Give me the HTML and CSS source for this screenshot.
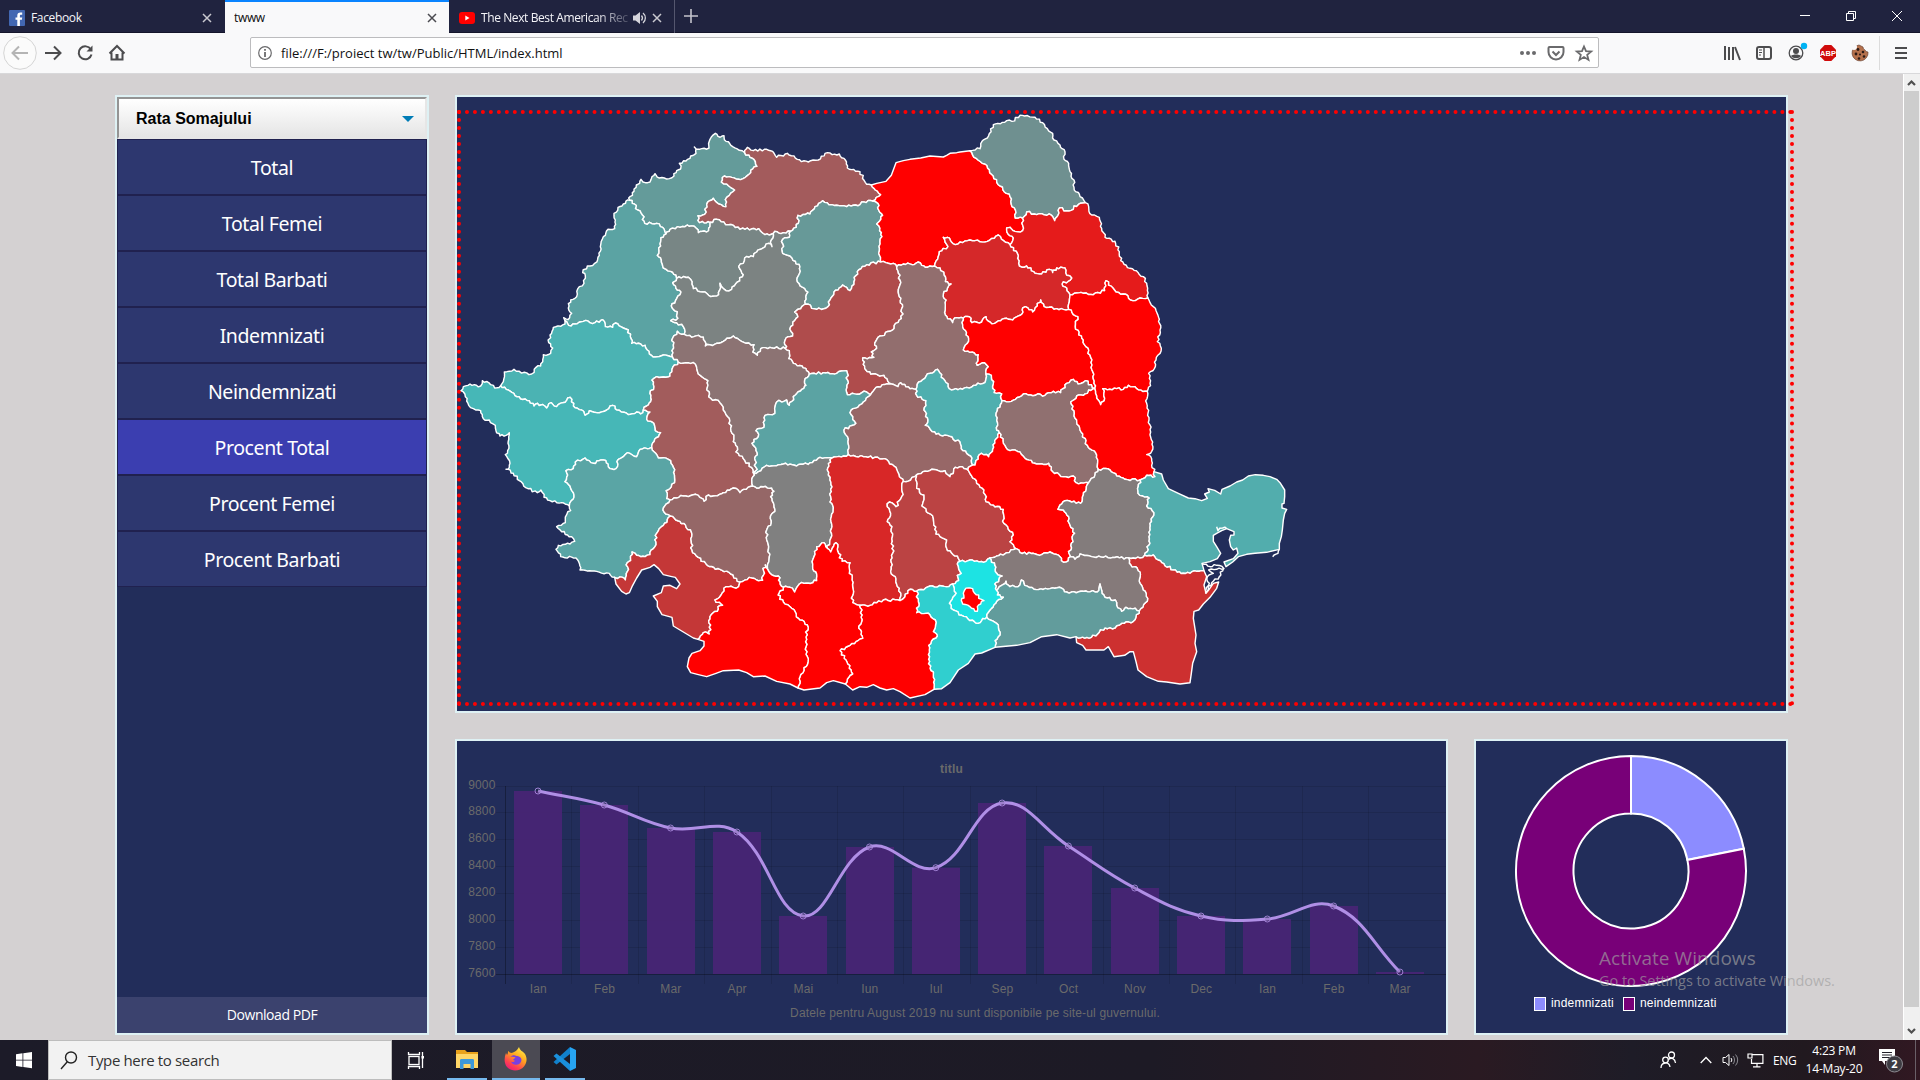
FILE: index.html
```html
<!DOCTYPE html>
<html lang="ro">
<head>
<meta charset="utf-8">
<title>twww</title>
<link rel="stylesheet" href="styles.css">
</head>
<body>
<div class="screen">
  <header class="tabs">
    <div class="tab">
      <svg class="tab-icon" width="16" height="16" viewBox="0 0 16 16"><rect width="16" height="16" rx="1" fill="#4267b2"/><path d="M8.300 16V9.800H6.500V7.400h1.800V5.700c0-2 1.100-3.200 3.100-3.200h1.800v2.300h-1.200c-.9 0-1.100.4-1.100 1.100v1.500h2.300l-.3 2.400h-2V16z" fill="#fff"/></svg>
      <span class="tab-title">Facebook</span>
      <svg class="x" width="10" height="10" viewBox="0 0 10 10"><path d="M1 1l8 8M9 1l-8 8"/></svg>
    </div>
    <div class="tab active">
      <span class="tab-title">twww</span>
      <svg class="x" width="10" height="10" viewBox="0 0 10 10"><path d="M1 1l8 8M9 1l-8 8"/></svg>
    </div>
    <div class="tab last">
      <svg class="tab-icon" width="16" height="16" viewBox="0 0 16 16"><rect y="2" width="16" height="12" rx="3" fill="#f00"/><path d="M6.300 5.500v5l4.200-2.500z" fill="#fff"/></svg>
      <span class="tab-title fade">The Next Best American Rec</span>
      <svg class="sound" width="14" height="14" viewBox="0 0 14 14"><path d="M0 4.500h2.500L7 1v12L2.500 9.500H0z" fill="#d5d5dc"/><path d="M8.500 4.500a4 4 0 0 1 0 5M10 2a6.500 6.500 0 0 1 0 10" fill="none" stroke="#d5d5dc" stroke-width="1.300"/></svg>
      <svg class="x" width="10" height="10" viewBox="0 0 10 10"><path d="M1 1l8 8M9 1l-8 8"/></svg>
    </div>
    <svg class="plus" width="14" height="14" viewBox="0 0 14 14"><path d="M7 0v14M0 7h14" stroke="#c4c4cc" stroke-width="1.600"/></svg>
    <div class="winbtns">
      <svg width="46" height="32" viewBox="0 0 46 32"><path d="M18 15.500h10" stroke="#fff"/></svg>
      <svg width="46" height="32" viewBox="0 0 46 32"><path d="M18.500 13.500h7v7h-7zM20.500 13.500v-2h7v7h-2" fill="none" stroke="#fff"/></svg>
      <svg width="46" height="32" viewBox="0 0 46 32"><path d="M18 11l10 10M28 11l-10 10" stroke="#fff"/></svg>
    </div>
  </header>

  <nav class="toolbar">
    <svg class="back" width="34" height="34" viewBox="0 0 34 34"><circle cx="17" cy="17" r="16.300" fill="#fbfbfb" stroke="#d4d4d4"/><path d="M25 17H10M16 10.500L9.500 17l6.500 6.500" fill="none" stroke="#b4b4b4" stroke-width="2"/></svg>
    <svg width="32" height="32" viewBox="0 0 32 32"><path d="M8 16h15M17 9.500l6.500 6.500-6.500 6.500" fill="none" stroke="#4c4c4e" stroke-width="2"/></svg>
    <svg width="32" height="32" viewBox="0 0 32 32"><path d="M21.800 12.500A6.500 6.500 0 1 0 22.500 17.500" fill="none" stroke="#4c4c4e" stroke-width="2"/><path d="M23.500 8.500v6h-6z" fill="#4c4c4e"/></svg>
    <svg width="32" height="32" viewBox="0 0 32 32"><path d="M8.500 16.500L16 9l7.500 7.500M10.500 15.500v7h11v-7" fill="none" stroke="#4c4c4e" stroke-width="2"/><path d="M14.500 17h3v5.500h-3z" fill="#4c4c4e"/></svg>
    <div class="url">
      <svg class="info" width="14" height="14" viewBox="0 0 14 14"><circle cx="7" cy="7" r="6.300" fill="none" stroke="#6a6a6c" stroke-width="1.200"/><path d="M7 6v5M7 3v1.800" stroke="#6a6a6c" stroke-width="1.800"/></svg>
      <span class="addr">file:///F:/proiect tw/tw/Public/HTML/index.html</span>
      <svg width="28" height="28" viewBox="0 0 28 28" fill="#6a6a6c"><circle cx="8" cy="14" r="2"/><circle cx="14" cy="14" r="2"/><circle cx="20" cy="14" r="2"/></svg>
      <svg width="28" height="28" viewBox="0 0 28 28" fill="none" stroke="#6a6a6c" stroke-width="2"><path d="M7.500 8h13c.6 0 1 .4 1 1v4a7.500 7.500 0 0 1-15 0V9c0-.6.400-1 1-1z"/><path d="M10.500 12.500L14 16l3.500-3.500"/></svg>
      <svg width="28" height="28" viewBox="0 0 28 28"><path d="M14 7.500l2 4.700 5.200.4-4 3.300 1.300 5-4.500-2.800-4.500 2.800 1.300-5-4-3.300 5.200-.4z" fill="none" stroke="#6a6a6c" stroke-width="1.800"/></svg>
    </div>
    <div class="tools">
      <svg width="32" height="32" viewBox="0 0 32 32"><path d="M10 9v14M14 10v13M18 10v13M20 10l5 13" stroke="#4c4c4e" stroke-width="2" transform="translate(-1)"/></svg>
      <svg width="32" height="32" viewBox="0 0 32 32"><rect x="9" y="10" width="14" height="12" rx="2" fill="none" stroke="#4c4c4e" stroke-width="2"/><path d="M16 10v12" stroke="#4c4c4e" stroke-width="1.500"/><path d="M11 13h3M11 15.500h3M11 18h2" stroke="#4c4c4e"/></svg>
      <svg width="32" height="32" viewBox="0 0 32 32"><circle cx="16" cy="16" r="6.800" fill="none" stroke="#4c4c4e" stroke-width="1.300"/><circle cx="16" cy="14" r="3" fill="#4c4c4e"/><path d="M11 19c1.500-2 8.500-2 10 0-2 3-8 3-10 0z" fill="#4c4c4e"/><circle cx="24" cy="9" r="3.200" fill="#00b3f4"/></svg>
      <svg width="32" height="32" viewBox="0 0 32 32"><path d="M12.700 8h6.600L24 12.700v6.600L19.300 24h-6.600L8 19.300v-6.600z" fill="#d00b0b"/><text x="16" y="19" text-anchor="middle" class="abp">ABP</text></svg>
      <svg width="32" height="32" viewBox="0 0 32 32"><path d="M15 8a8 8 0 1 0 9 7 3 3 0 0 1-3-2 3 3 0 0 1-2-3z" fill="#b5714c" stroke="#6d4636" stroke-width=".7"/><circle cx="10" cy="10" r="3" fill="#f9f9fa"/><g fill="#2b1a16"><circle cx="14" cy="12.500" r="1.400"/><circle cx="19" cy="15" r="1.300"/><circle cx="12" cy="17" r="1.400"/><circle cx="16" cy="17.500" r="1"/><circle cx="20" cy="19.500" r="1.300"/><circle cx="15" cy="21.500" r="1.300"/></g></svg>
    </div>
    <svg class="burger" width="38" height="34" viewBox="0 0 38 34"><path d="M.5 0v34" stroke="#dcdcdc"/><path d="M16 12h12M16 17h12M16 22h12" stroke="#4c4c4e" stroke-width="2"/></svg>
  </nav>

  <div class="viewport">
    <main class="grid">
      <aside class="panel side">
        <div class="select"><span>Rata Somajului</span><i class="arrow"></i></div>
        <ul class="menu">
          <li>Total</li><li>Total Femei</li><li>Total Barbati</li><li>Indemnizati</li>
          <li>Neindemnizati</li><li class="on">Procent Total</li><li>Procent Femei</li><li>Procent Barbati</li>
        </ul>
        <div class="pdf">Download PDF</div>
      </aside>
      <section class="panel mapbox"><svg id="map" class="map" viewBox="33 42 3987 1764"></svg></section>
      <section class="panel"><svg id="chart" class="chart" width="989" height="292" viewBox="457 741 989 292"></svg></section>
      <section class="panel">
        <svg class="donut" width="310" height="292" viewBox="1476 741 310 292">
          <g stroke="#fff" stroke-width="2">
            <path d="M1631 756A115 115 0 0 1 1743.800 848.700L1687.400 859.900A57.500 57.500 0 0 0 1631 813.500z" fill="#8c8cff"/>
            <path d="M1743.800 848.700A115 115 0 1 1 1631 756V813.500A57.500 57.500 0 1 0 1687.400 859.900z" fill="#780078"/>
          </g>
          <rect x="1534.500" y="997.500" width="11" height="13" fill="#8c8cff" stroke="#fff"/>
          <text x="1551" y="1007">indemnizati</text>
          <rect x="1623.500" y="997.500" width="11" height="13" fill="#780078" stroke="#fff"/>
          <text x="1640" y="1007">neindemnizati</text>
        </svg>
      </section>
    </main>
    <div class="scroll">
      <svg width="15" height="17" viewBox="0 0 15 17"><path d="M4 11l3.500-3.500L11 11" fill="none" stroke="#505050" stroke-width="2.200"/></svg>
      <div class="thumb"></div>
      <svg width="15" height="17" viewBox="0 0 15 17"><path d="M4 6l3.500 3.500L11 6" fill="none" stroke="#505050" stroke-width="2.200"/></svg>
    </div>
  </div>

  <footer class="taskbar">
    <svg width="48" height="40" viewBox="0 0 48 40"><path d="M16 14.200l6.500-.9v6.400H16zM23.300 13.200l8.700-1.200v7.700h-8.700zM16 20.500h6.500v6.400l-6.500-.9zM23.300 20.500H32v7.700l-8.700-1.200z" fill="#fff"/></svg>
    <div class="search">
      <svg width="18" height="20" viewBox="0 0 18 20"><circle cx="11" cy="7.500" r="5.500" fill="none" stroke="#222" stroke-width="1.400"/><path d="M7.300 11.800L1 19" stroke="#222" stroke-width="1.400"/></svg>
      <span>Type here to search</span>
    </div>
    <svg width="48" height="40" viewBox="0 0 48 40" fill="none" stroke="#fff" stroke-width="1.300"><rect x="18" y="16.500" width="10" height="8"/><path d="M17.500 12v2.500h11V12M17.500 29v-2.500h11V29M31.500 12v16"/><rect x="30.500" y="16" width="2.500" height="2.500" fill="#fff" stroke="none"/></svg>
    <div class="app a1"><svg width="24" height="22" viewBox="0 0 24 22"><path d="M1 2h9l2 2h11v16H1z" fill="#e9a21b"/><path d="M1 6h22v14H1z" fill="#ffd667"/><path d="M5 21v-8.500c0-1 .5-1.500 1.500-1.500h11c1 0 1.500.5 1.500 1.500V21h-3.500v-5h-7v5z" fill="#3d98d9"/></svg></div>
    <div class="app a2"><svg width="26" height="26" viewBox="0 0 26 26"><defs><linearGradient id="fx" x1=".8" y1="0" x2=".2" y2="1"><stop offset="0" stop-color="#fff14a"/><stop offset=".4" stop-color="#ffa61e"/><stop offset=".75" stop-color="#ff4150"/><stop offset="1" stop-color="#e9177d"/></linearGradient></defs><path d="M16 1c1 4 4 4 6 7 2 3.500 2.500 8-1 12.500-4 5-13 5.500-17 .5C1 17 1 12 3 7l1 2c1-1.500 1-2.500 1-4 1.500 1 2 2 4 2 2-1 5-2 7-6z" fill="url(#fx)"/><path d="M7.500 11c1.500-2 4-2.500 6-1 2 .2 5 1 5 4a5.500 5.500 0 0 1-10.500 1.500c1.500 1 3 .5 4-.8-1.500 0-2-.8-1.500-1.700 1-.5 1.500-.8 2-1.500-1.500-.8-3.500-.8-5-.5z" fill="#7a3fe0"/></svg></div>
    <div class="app a3"><svg width="26" height="26" viewBox="0 0 26 26"><path d="M18 1l6 3v18l-6 3z" fill="#27a4f2"/><path d="M18 1v7L4.500 18.500 1.500 16z" fill="#1180cb"/><path d="M18 25v-7L4.500 7.500 1.500 10z" fill="#1a90dc"/></svg></div>
    <div class="tray">
      <svg class="people" width="18" height="18" viewBox="0 0 18 18" fill="none" stroke="#fff" stroke-width="1.300"><circle cx="12.500" cy="4" r="3"/><circle cx="6.500" cy="9" r="2.800"/><path d="M2 17c0-6 8-7 9-1M9.500 8.500c3-2.500 6.500-1 7 3.500"/></svg>
      <svg class="chev" width="12" height="8" viewBox="0 0 12 8"><path d="M.7 7L6 1.500 11.300 7" fill="none" stroke="#fff" stroke-width="1.300"/></svg>
      <svg class="spk" width="17" height="14" viewBox="0 0 17 14" fill="none" stroke="#fff"><path d="M1 4.500h2.500L7 1.500v11L3.500 9.500H1zM9 5a3 3 0 0 1 0 4"/><path d="M11 3a6 6 0 0 1 0 8M13.500 1.500a8 8 0 0 1 0 11" stroke="#8a8a90"/></svg>
      <svg class="net" width="17" height="15" viewBox="0 0 17 15" fill="none" stroke="#fff" stroke-width="1.200"><path d="M5.500 1.600h10.400v8.800H4.500V6M10 10.500V14M6 13.900h7.500M1 1h4v4H1z"/></svg>
      <span class="lang">ENG</span>
      <div class="clock"><span>4:23 PM</span><span>14-May-20</span></div>
      <svg class="note" width="26" height="26" viewBox="0 0 26 26"><path d="M1 2h16v12H7v4l-3-4H1z" fill="#fff"/><path d="M4 5.500h10M4 8h10M4 10.500h10" stroke="#22202a"/><circle cx="16.500" cy="17" r="8" fill="#3d3b42" stroke="#8d8b92"/><text x="16.500" y="21" text-anchor="middle" class="badge">2</text></svg>
      <i class="peek"></i>
    </div>
  </footer>

  <div class="watermark"><b>Activate Windows</b><span>Go to Settings to activate Windows.</span></div>
</div>
<script src="charts.js"></script>
</body>
</html>
```

FILE: styles.css
```css
* { box-sizing: border-box; }
body { margin: 0; font-family: "Open Sans", "Noto Sans", sans-serif; overflow: hidden; }
svg { display: block; flex: none; }
.screen { width: 1920px; height: 1080px; display: flex; flex-direction: column; background: #d4d1d2; }

.tabs { height: 33px; flex: none; display: flex; align-items: center; background: #20233f; border-bottom: 1px solid #14152b; }
.tab { width: 225px; height: 33px; display: flex; align-items: center; padding: 3px 13px 0 9px; color: #f4f4f8; font-size: 12px; letter-spacing: -.35px; }
.tab.active { width: 224px; background: #f9f9fa; color: #0c0c0d; border-top: 2px solid #0a84ff; padding-top: 1px; padding-right: 12px; }
.tab.last { width: 226px; border-right: 1px solid #55576f; padding-right: 12px; padding-left: 10px; }
.tab-icon { margin-right: 6px; }
.tab-title { flex: 1; white-space: nowrap; overflow: hidden; }
.fade { letter-spacing: -.4px; -webkit-mask-image: linear-gradient(90deg, #000 78%, transparent 104%); mask-image: linear-gradient(90deg, #000 78%, transparent 104%); }
.sound { margin: 0 5px 0 4px; }
.x { stroke: #c9c9d0; stroke-width: 1.500; }
.active .x { stroke: #4a4a4f; }
.plus { margin-left: 9px; }
.winbtns { display: flex; margin-left: auto; }

.toolbar { height: 41px; flex: none; display: flex; align-items: center; padding: 0 0 1px 3px; background: #f9f9fa; border-bottom: 1px solid #d8d8da; }
.url { flex: none; width: 1349px; height: 31px; margin-left: 117px; display: flex; align-items: center; border: 1px solid #bcbcbe; border-radius: 2px; background: #fff; }
.info { margin: 0 9px 0 7px; }
.addr { flex: 1; font-size: 13px; color: #111; padding-top: 1px; }
.tools { display: flex; margin-left: 117px; }
.abp { font: bold 7.500px "Liberation Sans", sans-serif; fill: #fff; }
.burger { margin-left: 3px; }

.viewport { height: 966px; flex: none; display: flex; justify-content: space-between; }
.grid { display: grid; grid-template-columns: 314px 993px 314px; grid-template-rows: 618px 296px; gap: 26px; padding: 21px 0 0 115px; }
.panel { border: 2px solid #def1f4; background: #222d5a; min-width: 0; }
.side { grid-row: 1 / 3; display: flex; flex-direction: column; }
.mapbox { grid-column: 2 / 4; }
.map { width: 1337px; height: 596px; margin-top: 13px; border: 4px dotted #f00; overflow: visible; }
.map path { stroke: #fff; stroke-width: 4.300; stroke-linejoin: round; }
.select { height: 42px; flex: none; display: flex; align-items: center; justify-content: space-between; padding: 1px 11px 0 17px; border: 2px solid #e6e6e6; border-color: #949494 #e6e6e6 #e6e6e6 #949494; background: linear-gradient(#fff, #e5e5e5); font: bold 16px "Liberation Sans", sans-serif; }
.arrow { border: 6px solid transparent; border-top-color: #007cb6; border-bottom: 0; }
.menu { list-style: none; margin: 0; padding: 0; flex: 1; }
.menu li { height: 56px; display: flex; align-items: center; justify-content: center; background: #2d376f; border: 1px solid #20214f; color: #fff; font: 19.500px "Noto Sans", sans-serif; letter-spacing: -.4px; padding-top: 1px; }
.menu li.on { background: #3b3eb0; }
.pdf { height: 36px; display: flex; align-items: center; justify-content: center; padding-bottom: 1px; background: #3b426e; color: #fff; font-size: 14px; letter-spacing: -.45px; }
.chart text { font: 12px "Liberation Sans", sans-serif; letter-spacing: .16px; fill: #6a6a6a; }
.chart .title { font-weight: bold; }
.donut text { font: 12px "Liberation Sans", sans-serif; letter-spacing: .2px; fill: #fff; }
.bar { fill: #462574; fill-opacity: .97; }
.gridline { stroke: #000; stroke-opacity: .1; }
.axis { stroke: #000; stroke-opacity: .3; }
.line { fill: none; stroke: #b08fe6; stroke-width: 3; }
.dot { fill: #000; fill-opacity: .1; stroke: #b08fe6; stroke-opacity: .85; }

.scroll { width: 17px; height: 966px; border-left: 1px solid #fff; background: #f0f0f0; display: flex; flex-direction: column; }
.thumb { height: 916px; width: 15px; background: #cdcdcd; }
.scroll svg:last-child { margin-top: 16px; }

.taskbar { height: 40px; flex: none; display: flex; align-items: center; background: linear-gradient(90deg, #1c1b28, #1d1a25 60%, #2a1a22 77%, #1e1c27 85%, #21191f 94%, #311822); color: #fff; }
.search { width: 344px; height: 40px; display: flex; align-items: center; gap: 10px; padding-left: 11px; margin-right: -1px; background: #f2f2f2; border: 1px solid #bdbdbd; color: #333; font-size: 15px; letter-spacing: -.35px; }
.app { height: 40px; display: flex; align-items: center; justify-content: center; border-bottom: 2px solid #76b9ed; }
.a1 { width: 40px; margin-left: 8px; }
.a2 { width: 48px; margin-left: 5px; background: #4b4a53; }
.a3 { width: 40px; margin-left: 5px; }
.tray { margin-left: auto; display: flex; align-items: center; height: 40px; padding-right: 4px; }
.people { margin-right: 1px; }
.chev { margin-left: 22px; }
.spk { margin-left: 10px; }
.net { margin-left: 8px; }
.lang { margin-left: 9px; width: 24px; font-size: 12px; letter-spacing: -.4px; }
.clock { width: 68px; margin: 0 10px 0 3px; padding-bottom: 1px; display: flex; flex-direction: column; align-items: center; font-size: 12px; line-height: 18px; letter-spacing: -.2px; }
.note { margin-right: 11px; }
.peek { width: 1px; height: 40px; background: #6a6068; }
.badge { font: bold 11px "Open Sans", sans-serif; fill: #fff; }

.watermark { position: absolute; left: 1599px; top: 945px; display: flex; flex-direction: column; color: rgba(160, 160, 160, .68); white-space: nowrap; }
.watermark b { font-weight: 400; font-size: 19px; line-height: 26px; letter-spacing: .05px; }
.watermark span { font-size: 14.500px; line-height: 19px; letter-spacing: -.05px; }
```

FILE: charts.js
```js
const NS = "http://www.w3.org/2000/svg";
function add(parent, tag, attrs, text) {
  const el = document.createElementNS(NS, tag);
  for (const k in attrs) el.setAttribute(k, attrs[k]);
  if (text) el.textContent = text;
  parent.appendChild(el);
  return el;
}

const colors = {
  SM: "#649b9a", MM: "#a35b5c", BH: "#5ba3a3", SJ: "#788685", CJ: "#7c8382", BN: "#679998",
  SV: "#ff0000", BT: "#6f9090", IS: "#e51b1b", NT: "#d52829", MS: "#af4c4c", HR: "#926e6e",
  BC: "#ff0000", VS: "#ff0000", AR: "#4bb3b3", TM: "#46b7b7", HD: "#a25c5c", AB: "#8c7373",
  SB: "#5ba3a3", BV: "#976767", CV: "#4fafaf", VN: "#907070", GL: "#ff0000", CS: "#5aa5a5",
  MH: "#c43737", GJ: "#956767", VL: "#808080", AG: "#d82727", DB: "#bb4343", PH: "#bb4343",
  BZ: "#ff0000", BR: "#837c7c", TL: "#52adad", CT: "#cd3030", IL: "#857a7a", CL: "#629c9c",
  IF: "#1de3e3", GR: "#30cfcf", TR: "#ff0000", OT: "#ff0000", DJ: "#ff0000"
};

let seed = 7;
function rnd() { seed = (seed * 16807) % 2147483647; return seed / 2147483647 - .5; }

// Borders shared by two counties, or by one county and the outside ("-").
// A, B, C, D switch the quadrant that the following points are relative to;
// a leading "~" keeps the line smooth (rivers and the coast).
const quads = { A: [0, 0], B: [1200, 0], C: [0, 840], D: [1200, 840] };
const borders = `
SM - A 539,301 541,289 552,274 559,255 569,250 573,238 579,246 600,246 606,230 615,221 628,234 658,236 672,228 680,212 692,207 688,190 708,183 722,168 738,160 733,141 748,148 777,144 780,118 788,106 796,100 804,109 822,107 828,124 848,140 868,151 884,158
SM MM A 884,158 900,172 912,178 921,199 902,211 898,222 872,239 845,232 823,228 814,246 830,252 854,270 838,286 830,292 828,320 806,312 790,295 770,313 764,343 744,347 744,362 762,368 780,367
SM SJ A 780,367 780,380 770,396 745,398 738,384 712,375 682,380 660,388 648,402
SM BH A 648,402 638,382 620,370 584,370 577,345 563,330 553,312 539,301
BH - A 345,662 341,653 354,659 365,640 355,624 362,600 380,590 388,560 402,550 406,527 398,518 412,498 434,490 448,466 451,440 460,410 474,388 494,386 496,360 492,340 504,322 520,312 528,303 539,301
BH SJ A 648,402 633,413 632,438 622,466 634,480 640,504 662,514 678,525 680,535
BH CJ A 680,535 668,548 678,565 693,576 680,596 664,618 682,635 684,655 662,662 680,668 700,680 703,703
BH AB A 703,703 682,694 668,714 670,735 666,752 668,771
BH AR A 345,662 356,676 400,664 435,668 458,659 466,680 488,682 496,669 520,684 535,690 545,730 585,736 604,766 622,770 640,765 668,771
AR - A 152,857 160,845 163,816 192,808 208,814 245,822 258,802 272,798 280,764 302,760 308,744 296,728 300,705 310,682 345,672 345,662
AR TM A 152,857 175,870 200,890 238,902 252,918 262,910 290,924 304,908 320,920 338,908 360,892 370,918 395,930 405,946 418,932 440,938 470,930 488,916 500,930 535,944 560,936 572,942 580,930
AR HD A 580,930 590,918 602,905 600,880 612,860 606,840 620,830 660,828 666,808 685,786
AR AB A 685,786 668,771
TM - A 152,857 C 134,24 122,14 97,2 92,18 60,12 40,20 33,32 46,50 56,76 70,86 92,92 100,116 118,120 136,136 138,152 150,168 168,166 178,158 174,190 173,212 166,224 180,250 178,262 168,268 190,280 208,302 234,326 262,338 273,330 282,352 300,362 335,368 358,378
TM CS C 358,378 364,362 372,345 362,325 345,305 350,292 348,272 370,266 376,246 405,234 430,250 460,240 474,252 480,266 498,266 505,238 520,230 532,218 560,230 570,208 605,202
TM HD C 605,202 614,178 632,158 616,152 612,130 590,118 600,96 580,90
CS HD C 605,202 625,234 655,238 670,262 674,300 664,320 648,332 650,356 660,360
CS GJ C 660,360 640,384 642,396 662,408
CS MH C 662,408 640,436 620,460 618,486 600,524 585,530 560,526 546,516 542,542 532,548 532,575 526,600 518,592 494,592
CS - C 358,378 362,392 350,404 346,428 320,440 335,455 365,470 374,484 360,492 325,496 318,508 332,530 378,534 386,545 390,570 440,574 478,580 494,592
MH - ~ C 494,592 498,612 515,634 528,642 538,638 546,620 560,594 575,570 600,562 612,554 626,566 640,584 662,589 676,592 690,612 680,626 660,616 640,618 634,638 610,648 622,664 622,680 636,704 666,712 670,738 700,756 730,774 744,778
MH DJ C 744,778 760,758 778,762 782,735 776,722 788,700 802,694 804,680 818,676 795,660 816,640 822,624 850,622 866,620 870,606
MH GJ C 662,408 690,424 724,456 726,510 745,532 772,556 810,568 842,582 870,606
GJ HD C 660,360 700,348 745,346 762,364 776,345 790,348 820,338 850,324 870,338 908,318
GJ VL C 908,318 920,324 940,320 965,324 972,334 962,350 972,375 975,394 965,402 962,436 950,450 956,500 958,530 953,568
GJ DJ C 870,606 885,600 905,594 920,600 938,601 941,572 946,555 953,568
VL DJ C 953,568 960,580 985,588 990,612 1000,622
VL OT C 1000,622 1020,622 1034,636 1048,612 1075,610 1100,602 1100,582 1088,560 1092,530 1100,500 1122,488 1132,505
OT AG C 1132,505 1142,516 1158,488 1166,520 1176,544 1200,548 1198,566 1206,600 1208,668 1228,676
VL AG C 1132,505 1140,480 1146,440 1144,410 1150,382 1140,366 1144,335 1140,300 1132,270 1146,234
VL SB C 1146,234 1110,232 1080,248 1040,258 1000,252 950,256 925,275 910,278
VL HD C 910,278 908,318
HD AB A 685,786 715,788 736,792 745,822 774,842 772,862 776,890 810,908 820,930 838,955 C 842,145 852,165 850,185 862,200 858,216 880,236 905,262 910,278
AB SB C 910,278 922,268 918,262 914,235 922,225 918,205 906,190 912,178 925,170 918,152 942,142 945,106 975,100 980,66 1010,60 1018,76 1036,45 1064,18 A 1068,856 1066,835 1078,822
AB CJ A 703,703 725,712 745,706 760,712 766,738 800,730 850,708 888,730 912,734 908,756 922,766 932,746 960,742 1006,746
AB MS A 1006,746 1018,752 1016,776 1030,790 1056,798 1078,822
SJ MM A 780,367 800,358 835,374 885,388 926,386 945,404 970,400
SJ CJ A 680,535 715,532 726,545 730,566 765,576 782,590 806,584 810,550 828,572 845,568 862,546 880,524 866,500 880,490 884,474 910,470 920,456 955,430 966,440 964,420 970,400
MM CJ A 970,400 975,394 1000,398 1022,394
MM BN A 1022,394 1045,370 1044,346 1080,342 1095,320 1118,302 1145,314 1190,320 1230,314 1235,306 1268,303
MM SV A 1268,303 1292,284 1276,270 1264,255
MM - A 884,158 892,142 910,152 950,148 968,154 980,172 1012,160 1042,178 1075,186 1105,180 1125,160 1168,162 1186,180 1192,204 1230,215 1250,253 1264,255
SV - ~ B 64,255 80,250 108,244 124,226 138,188 160,182 180,178 212,174 240,168 280,171 290,166 300,160 320,158 330,156 360,152
SV BT B 360,152 384,180 405,192 430,228 450,258 480,290 486,320 498,338 496,354 518,354
BT - B 360,152 390,146 396,124 412,114 430,74 470,62 486,64 510,46 524,48 555,52 578,68 592,86 608,100 612,120 630,135 645,155 642,178 656,190 660,215 672,240 672,262 690,290 706,308
BT IS B 518,354 530,336 560,344 605,346 614,362 624,346 628,324 650,332 670,328 672,318 706,308
IS - B 706,308 716,320 725,345 748,352 755,385 765,412 795,424 808,455 812,482 840,505 880,530 890,550 894,594
IS VS B 894,594 870,594 848,602 820,582 798,576 768,542 764,572 730,584 700,580 660,584
IS NT B 660,584 650,564 636,552 665,534 650,526 645,504 620,504 608,518 598,508 575,522 555,520 530,498 508,498 502,460 480,434
SV IS B 518,354 518,392 495,394 480,382 470,384 474,402 490,414 480,434
SV NT B 480,434 445,405 412,424 375,422 330,426 316,434 292,412 280,412 294,440 268,455 254,498
NT HR B 254,498 270,504 282,525 286,545 303,552 292,565 280,582 288,600 286,645 308,668 314,654 340,654
NT BC B 340,654 358,650 366,668 395,666 408,650 420,666 434,670 470,655 488,660 516,642 518,624 534,624 548,636 562,618 572,600 582,620 620,626 640,628 656,628
NT VS B 660,584 658,605 656,628
BC VS B 656,628 684,650 676,680 700,720 720,765 726,810 732,850 734,866
BC HR B 340,654 338,674 356,716 340,750 385,764 382,796 404,788 415,800 408,822
SV HR B 254,498 232,502 215,496 204,486 186,494 160,492 140,500
SV MS B 140,500 130,490 92,486
SV BN B 92,486 86,460 90,425 96,410 90,385 80,372 98,346 86,330 84,310 68,303
BN CJ A 1022,394 1018,412 998,418 998,460 1026,474 1050,500 1042,545 1074,576 1066,612
BN MS A 1066,612 1100,628 1134,620 1140,600 1152,576 1178,555 1200,572 1212,545 1222,515 1250,494 1292,486
CJ MS A 1066,612 1034,636 1044,650 1022,680 1028,708 1008,714 1006,746
MS HR B 140,500 150,540 148,590 158,620 154,656 120,694 84,712 74,735 80,745 64,756 72,772 38,774 44,805 62,822 102,826 124,852
MS SB A 1078,822 1120,818 1160,820 1190,812 1192,884 1250,876 1262,884
MS BV B 62,884 78,862 124,852
HR BV B 124,852 144,860 152,848 180,866 198,868
HR CV B 198,868 206,846 240,820 262,808 280,836 304,870 350,862 405,848 408,822
BC CV B 408,822 424,826 432,878 455,882 456,902
BC VN B 456,902 484,904 520,882 585,886 610,874 632,878 650,850 670,838 684,852 706,842 734,866
VN GL B 734,866 716,870 712,880 680,888 662,906 680,960 D 690,150 712,196 740,225 745,268
VS GL B 734,866 740,895 752,914 764,895 758,866 800,866 820,868 835,856 860,866 892,874
VS - B 894,594 910,620 928,658 930,690 922,725 934,745 918,780 916,800 896,820 900,850 892,874
GL - B 892,874 890,910 897,960 D 902,156 908,186 905,214 890,224 905,236 912,275
GL TL D 912,275 915,290 890,286 870,300
GL BR D 745,268 780,270 800,288 825,298 870,300
VN BR D 745,268 735,285 716,308
VN BZ D 448,158 460,190 480,212 510,216 525,235 560,252 596,250 608,275 640,290 670,288 678,308 716,308
VN CV D 456,62 442,92 440,150 448,158
CV BZ D 448,158 434,182 428,208 416,230 394,220 375,255 368,255
CV BV D 198,28 200,46 228,62 222,90 234,120 226,136 258,162 285,165 330,185 334,206 362,228 368,255
BV BZ D 368,255 355,262 354,270
BV PH D 354,270 330,260 316,262 300,290 285,272 245,268 200,284
BV DB D 200,284 182,300 160,304
BV AG D 160,304 148,290 138,262 104,236 40,230 -5,224
SB AG C 1195,224 1146,234
SB BV C 1262,44 1240,66 1200,98 1218,130 1182,150 1194,185 1195,224
BZ PH D 354,270 380,310 402,330 408,365 430,375 460,388 462,430 475,448 490,465 480,485 498,506
BZ IL D 498,506 510,518 550,520 575,524 600,516 630,530 634,542 648,546 662,530
BZ BR D 716,308 700,345 692,370 645,362 624,388 640,390 656,410 660,435 674,460 664,490 658,522 662,530
BR IL D 662,530 675,538 690,522 760,532 836,534
BR CT D 836,534 850,534 870,534 884,526
BR TL D 870,300 864,340 898,354 890,378 912,398 900,430 900,490 884,526
TL - ~ D 912,275 935,282 940,300 955,326 985,340 1015,354 1035,356 1055,362 1072,355 1064,342 1078,336 1074,326 1094,331 1112,342 1116,328 1140,318 1160,306 1178,300 1195,288 1216,284 1240,286 1260,290 1280,298 1290,308 1304,330 1304,350 1302,370 1296,372 1296,384 1310,388 1304,400 1300,420 1297,450 1294,470 1288,490 1288,508 1250,517 1215,520 1190,523 1165,530 1148,546 1128,560 1122,546 1150,536 1164,520 1160,504 1150,510 1142,500 1138,480 1142,466 1152,465 1152,455 1130,446 1115,452 1100,460 1090,466 1090,484 1100,500 1112,520 1102,536 1080,545 1056,550 1062,572
TL CT D 884,526 910,525 935,548 970,570 1000,580 1040,574 1062,572
CT - ~ D 1062,572 1070,590 1062,615 1068,640 1076,630 1090,610 1106,606 1100,625 1080,652 1060,672 1046,690 1032,694 1030,715 1034,740 1038,765 1035,790 1040,815 1028,850 1024,880 1020,908 990,912 950,906 925,904 890,890 864,870 858,845 850,815 840,815 824,826 792,830 775,800 762,810 708,810 698,796 680,788 678,770
CT CL D 678,770 724,772 765,744 795,744 815,730 850,724 868,692
CT IL D 836,534 838,550 870,576 870,610 893,655 868,692
IL CL D 868,692 828,682 815,694 800,676 796,660 772,654 756,640 750,612 742,636 700,634 650,636 636,625 600,626 552,628 524,616 514,600 504,620 480,620 468,604 448,620 440,632
IF IL D 440,632 434,612 456,588 440,580 434,556 420,534
PH IL D 498,506 470,518 440,528 420,534
PH IF D 420,534 408,544 360,540 330,544
DB PH D 200,284 200,325 222,345 216,378 250,415 258,462 290,480 290,505 325,535 330,544
DB IF D 330,544 322,552 334,580 322,586 326,602 308,612
DB GR D 308,612 290,620 240,618 200,634
DB TR D 200,634 180,628 165,650 150,662
DB AG D 160,304 155,350 138,380 118,366 112,380 122,400 112,425 126,440 128,520 122,574 136,590 148,625 150,662
AG TR D 150,662 100,660 60,676 28,676
OT TR D 28,676 36,705 26,745 38,775 0,796 C 1170,812 1188,840 1208,882 1186,912
TR - ~ C 1186,912 1208,930 1230,920 1250,922 1270,914 1290,924 1310,930 D 130,926 150,935 180,954 225,944 252,928
TR GR D 200,634 205,665 200,698 235,700 256,720 250,755 262,768 236,796 240,865 250,885 252,928
GR - ~ D 252,928 275,926 300,908 325,870 355,850 375,822 395,819 435,802
GR CL D 435,802 435,782 450,765 445,735 410,712
GR IF D 308,612 318,640 298,670 310,690 335,706 378,730 395,722 410,712
IF CL D 410,712 420,690 440,664 460,652 442,645 440,632
CL - ~ D 678,770 660,774 620,764 575,770 540,788 500,796 435,802
DJ - ~ C 744,778 762,784 762,798 750,812 726,820 717,834 712,860 722,878 745,884 770,890 798,880 820,872 866,870 890,878 910,890 945,888 980,904 1020,912 1044,924
DJ OT C 1000,622 984,645 1000,666 1025,685 1045,715 1072,735 1068,800 1074,845 1050,890 1044,924
OT - ~ C 1044,924 1062,930 1110,924 1130,908 1150,902 1186,912
`.trim().split("\n").map(parse);

function parse(row) {
  const t = row.split(" "), ids = t.splice(0, 2);
  const smooth = t[0] === "~";
  if (smooth) t.shift();
  let q = [0, 0];
  const pts = [];
  for (const w of t) {
    if (quads[w]) q = quads[w];
    else { const [x, y] = w.split(",").map(Number); pts.push([x + q[0], y + q[1]]); }
  }
  return { ids, pts: smooth ? pts : rough(pts) };
}

function rough(pts) {
  const out = [pts[0]];
  for (let i = 1; i < pts.length; i++) {
    const [ax, ay] = pts[i - 1], [bx, by] = pts[i];
    const len = Math.hypot(bx - ax, by - ay), n = Math.max(1, Math.round(len / 7));
    for (let k = 1; k < n; k++) {
      const f = k / n, d = rnd() * 8;
      out.push([ax + (bx - ax) * f - (by - ay) / len * d, ay + (by - ay) * f + (bx - ax) / len * d]);
    }
    out.push([bx, by]);
  }
  return out;
}

function dist(a, b) { return Math.hypot(a[0] - b[0], a[1] - b[1]); }
function ring(id) {
  const rest = borders.filter(b => b.ids.includes(id)).map(b => b.pts);
  let out = rest.shift().slice();
  while (rest.length) {
    const end = out[out.length - 1];
    let best = 0, flip = false, min = Infinity;
    rest.forEach((p, i) => {
      if (dist(end, p[0]) < min) { min = dist(end, p[0]); best = i; flip = false; }
      if (dist(end, p[p.length - 1]) < min) { min = dist(end, p[p.length - 1]); best = i; flip = true; }
    });
    const next = rest.splice(best, 1)[0].slice();
    out = out.concat(flip ? next.reverse() : next);
  }
  return out;
}
function path(pts) { return "M" + pts.map(p => p[0].toFixed(1) + " " + p[1].toFixed(1)).join("L"); }

const map = document.getElementById("map");
for (const id in colors) add(map, "path", { d: path(ring(id)) + "Z", fill: colors[id] });
const city = parse("B - D 344,630 355,624 368,626 374,640 386,645 386,655 402,662 392,672 382,680 382,694 360,680 338,672 334,662 342,654 340,640 344,630");
add(map, "path", { d: path(city.pts) + "Z", fill: "#f00" });
[ // lagoons and islets by the Danube delta
  "X - D 1056,550 1080,560 1100,556 1122,566 1100,568 1076,570 1090,580 1072,590 1078,610 1068,630",
  "X - D 1120,566 1108,590 1085,608 1066,640",
  "X - D 1100,440 1104,452 1118,444 1130,446",
  "X - D 1288,508 1284,520 1268,530"
].forEach(s => add(map, "path", { d: path(parse(s).pts), fill: "none" }));

const chart = document.getElementById("chart");
const labels = ["Ian", "Feb", "Mar", "Apr", "Mai", "Iun", "Iul", "Sep", "Oct", "Nov", "Dec", "Ian", "Feb", "Mar"];
const ys = [791, 805, 828, 832, 916, 847, 867.7, 803, 846, 888, 916, 919, 906, 972];
const left = 505.5, top0 = 786.5, bottom = 974.5, step = 66.4;
for (let i = 0; i < 8; i++) {
  const y = Math.round(top0 + i * (bottom - top0) / 7) - .5;
  add(chart, "path", { d: `M496 ${y}H1446`, class: i === 7 ? "axis" : "gridline" });
  add(chart, "text", { x: 495.5, y: y + 2.5, "text-anchor": "end" }, String(9000 - 200 * i));
}
for (let i = 0; i < 14; i++) {
  const x = Math.floor(left + i * step) + .5;
  add(chart, "path", { d: `M${x} 786V984`, class: i ? "gridline" : "axis" });
}
const pts = ys.map((y, i) => [538 + i * 66.3, y]);
pts.forEach(([x, y], i) => {
  add(chart, "rect", { x: Math.round(x - 24), y, width: 48, height: 974 - y, class: "bar" });
  add(chart, "text", { x: x + .3, y: 993, "text-anchor": "middle" }, labels[i]);
});
const ctl = pts.map((p, i) => {
  const a = pts[i - 1] || p, b = pts[i + 1] || p, da = dist(a, p), db = dist(p, b);
  const fa = .4 * da / (da + db), fb = .4 * db / (da + db);
  return [[p[0] - fa * (b[0] - a[0]), p[1] - fa * (b[1] - a[1])], [p[0] + fb * (b[0] - a[0]), p[1] + fb * (b[1] - a[1])]];
});
let d = "M" + pts[0];
for (let i = 1; i < 14; i++) d += `C${ctl[i - 1][1]} ${ctl[i][0]} ${pts[i]}`;
add(chart, "path", { d, class: "line" });
pts.forEach(([x, y]) => add(chart, "circle", { cx: x, cy: y, r: 3, class: "dot" }));
add(chart, "text", { x: 951.5, y: 773, "text-anchor": "middle", class: "title" }, "titlu");
add(chart, "text", { x: 975, y: 1017, "text-anchor": "middle" }, "Datele pentru August 2019 nu sunt disponibile pe site-ul guvernului.");
```
